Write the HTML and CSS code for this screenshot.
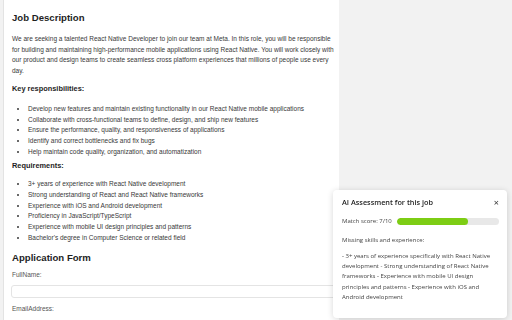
FILE: index.html
```html
<html>
<head>
  <title>React Native Developer - Meta</title>
  <link rel="stylesheet" href="styles.css">
</head>
<body>
  <div class="page">
    <div class="job">
      <h2>Job Description</h2>
      <p>We are seeking a talented React Native Developer to join our team at Meta. In this role, you will be responsible for building and maintaining high-performance mobile applications using React Native. You will work closely with our product and design teams to create seamless cross platform experiences that millions of people use every day.</p>

      <h3>Key responsibilities:</h3>
      <ul class="duties">
        <li>Develop new features and maintain existing functionality in our React Native mobile applications</li>
        <li>Collaborate with cross-functional teams to define, design, and ship new features</li>
        <li>Ensure the performance, quality, and responsiveness of applications</li>
        <li>Identify and correct bottlenecks and fix bugs</li>
        <li>Help maintain code quality, organization, and automatization</li>
      </ul>

      <h3 class="req">Requirements:</h3>
      <ul>
        <li>3+ years of experience with React Native development</li>
        <li>Strong understanding of React and React Native frameworks</li>
        <li>Experience with iOS and Android development</li>
        <li>Proficiency in JavaScript/TypeScript</li>
        <li>Experience with mobile UI design principles and patterns</li>
        <li>Bachelor's degree in Computer Science or related field</li>
      </ul>

      <h2 class="form-title">Application Form</h2>
      <form>
        <label for="fullname">FullName:</label>
        <input id="fullname" type="text">
        <label for="email">EmailAddress:</label>
        <input id="email" type="text">
      </form>
    </div>
  </div>

  <div class="assessment">
    <div class="assessment-head">
      <span class="assessment-title">AI Assessment for this job</span>
      <span class="close">&times;</span>
    </div>
    <div class="score">
      <span>Match score: 7/10</span>
      <div class="bar"><div class="fill" style="width: 70%"></div></div>
    </div>
    <div class="missing">Missing skills and experience:</div>
    <p class="missing-list">- 3+ years of experience specifically with React Native development - Strong understanding of React Native frameworks - Experience with mobile UI design principles and patterns - Experience with iOS and Android development</p>
  </div>
</body>
</html>
```

FILE: styles.css
```css
body {
  margin: 0;
  padding: 0 0 0 3px;
  height: 320px;
  background-color: #f2f2f2;
  font-family: "Liberation Sans", Arial, sans-serif;
  overflow: hidden;
}

.page {
  display: flex;
  height: 320px;
}

.job {
  width: 327px;
  background-color: #fff;
  border-left: 1px solid #e3e3e3;
  padding: 12px 0 0 8px;
  color: #383838;
  font-size: 6.5px;
  line-height: 10.7px;
  overflow: hidden;
}

h2 {
  margin: 0;
  font-size: 9.6px;
  line-height: 12px;
  color: #1e1e1e;
}

h3 {
  margin: 7px 0 0 0;
  font-size: 7.4px;
  line-height: 10px;
  color: #1e1e1e;
}

h3.req {
  margin-top: 4px;
}

.job p {
  margin: 10px 0 0 0;
}

ul {
  margin: 8px 0 0 0;
  padding-left: 16px;
}

ul.duties {
  margin-top: 10px;
}

.form-title {
  margin-top: 8px;
}

form {
  display: flex;
  flex-direction: column;
  margin-top: 6px;
}

label {
  color: #555;
}

input {
  height: 13px;
  margin: 5px 0 6px -1px;
  width: 326px;
  border: 1px solid #e4e4e4;
  border-radius: 3px;
  background: #fff;
  box-sizing: border-box;
}

.assessment {
  position: fixed;
  left: 333px;
  top: 190px;
  width: 174px;
  height: 128px;
  box-sizing: border-box;
  padding: 6px 8px 0 9px;
  background: #fff;
  border-radius: 4px;
  box-shadow: 0 1px 6px rgba(0, 0, 0, 0.16);
  font-family: "Open Sans", "Noto Sans", sans-serif;
  font-size: 6px;
  color: #444;
}

.assessment-head {
  display: flex;
  justify-content: space-between;
  align-items: center;
  height: 12px;
}

.assessment-title {
  font-weight: 600;
  font-size: 7.3px;
  color: #1e1e1e;
}

.close {
  font-size: 9px;
  color: #333;
}

.score {
  display: flex;
  align-items: center;
  gap: 5px;
  margin-top: 8px;
  height: 10px;
}

.bar {
  flex: 1;
  height: 7px;
  border-radius: 4px;
  background: #e8e8e8;
  overflow: hidden;
}

.fill {
  height: 100%;
  background: #7dcd14;
  border-radius: 4px;
}

.missing {
  margin-top: 9px;
  line-height: 10px;
}

.missing-list {
  margin: 6px 0 0 0;
  line-height: 10.2px;
}
```
